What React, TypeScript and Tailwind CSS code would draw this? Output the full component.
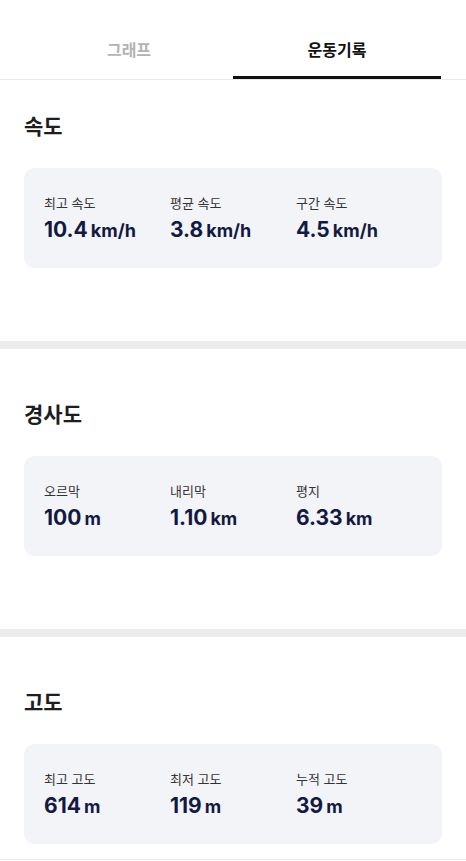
import { useState } from "react";

type Stat = { label: string; value: string; unit: string };

const sections: { title: string; stats: Stat[] }[] = [
  {
    title: "속도",
    stats: [
      { label: "최고 속도", value: "10.4", unit: "km/h" },
      { label: "평균 속도", value: "3.8", unit: "km/h" },
      { label: "구간 속도", value: "4.5", unit: "km/h" },
    ],
  },
  {
    title: "경사도",
    stats: [
      { label: "오르막", value: "100", unit: "m" },
      { label: "내리막", value: "1.10", unit: "km" },
      { label: "평지", value: "6.33", unit: "km" },
    ],
  },
  {
    title: "고도",
    stats: [
      { label: "최고 고도", value: "614", unit: "m" },
      { label: "최저 고도", value: "119", unit: "m" },
      { label: "누적 고도", value: "39", unit: "m" },
    ],
  },
];

function StatCard({ stats }: { stats: Stat[] }) {
  return (
    <div className="mx-6 h-[100px] rounded-[11px] bg-[#f3f4f8] px-5 pt-[26px]">
      <div className="flex">
        {stats.map((s) => (
          <div key={s.label} className="w-[126px]">
            <div className="text-[13px] leading-[18px] text-[#333333]">{s.label}</div>
            <div className="mt-[5px] flex items-baseline font-bold leading-[26px] text-[#131a42]">
              <span className="text-[21px]">{s.value}</span>
              <span className="ml-[3px] text-[18px]">{s.unit}</span>
            </div>
          </div>
        ))}
      </div>
    </div>
  );
}

export default function App() {
  const [tab, setTab] = useState(1);
  const tabs = ["그래프", "운동기록"];

  return (
    <div
      className="min-h-[861px] w-[466px] bg-white"
      style={{ fontFamily: '"Inter", "Noto Sans CJK KR", sans-serif' }}
    >
      {/* Tabs */}
      <div className="flex h-[80px] border-b border-[#e9e9e9] px-[25px]">
        {tabs.map((t, i) => (
          <button
            key={t}
            onClick={() => setTab(i)}
            className="flex flex-1 flex-col items-center"
          >
            <span
              className={`mt-[38px] text-[16px] font-bold leading-6 ${
                tab === i ? "text-[#111111]" : "text-[#b3b3b3]"
              }`}
            >
              {t}
            </span>
            <span
              className={`mt-auto h-[3px] w-full ${tab === i ? "bg-[#111111]" : "bg-transparent"}`}
            />
          </button>
        ))}
      </div>

      {/* Sections */}
      {sections.map((sec, i) => (
        <div key={sec.title}>
          {i > 0 && <div className="h-[8px] bg-[#ebebeb]" />}
          <div
            className={`${i === 0 ? "pt-[33px]" : "pt-[52px]"} ${
              i === sections.length - 1 ? "pb-[15px]" : "pb-[73px]"
            }`}
          >
            <h2 className="mb-[27px] px-6 text-[21px] font-bold leading-[28px] text-[#1e1e1e]">
              {sec.title}
            </h2>
            <StatCard stats={sec.stats} />
          </div>
        </div>
      ))}
      <div className="h-px bg-[#ececec]" />
    </div>
  );
}
